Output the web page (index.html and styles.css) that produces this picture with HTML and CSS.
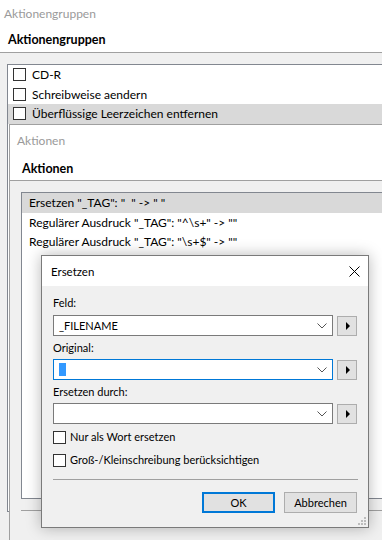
FILE: index.html
```html
<!DOCTYPE html>
<html lang="de">
<head>
    <meta charset="UTF-8">
    <title>Ersetzen</title>
    <link rel="stylesheet" href="styles.css">
</head>
<body>
    <div class="desk">
        <!-- Fenster 1: Aktionengruppen -->
        <div class="win win-groups">
            <div class="win-head">
                <div class="win-title">Aktionengruppen</div>
                <div class="win-caption">Aktionengruppen</div>
            </div>
            <div class="win-body">
                <div class="listbox list-groups">
                    <div class="row"><span class="chk"></span>CD-R</div>
                    <div class="row"><span class="chk"></span>Schreibweise aendern</div>
                    <div class="row sel"><span class="chk"></span>Überflüssige Leerzeichen entfernen</div>
                </div>
            </div>
        </div>

        <!-- Fenster 2: Aktionen -->
        <div class="win win-actions">
            <div class="win-head">
                <div class="win-title">Aktionen</div>
                <div class="win-caption">Aktionen</div>
            </div>
            <div class="win-body">
                <div class="listbox list-actions">
                    <div class="row sel">Ersetzen "_TAG": "&nbsp; " -&gt; " "</div>
                    <div class="row">Regulärer Ausdruck "_TAG": "^\s+" -&gt; ""</div>
                    <div class="row">Regulärer Ausdruck "_TAG": "\s+$" -&gt; ""</div>
                </div>
                <div class="win-foot"></div>
            </div>
        </div>

        <!-- Dialog: Ersetzen -->
        <div class="dialog">
            <div class="dlg-titlebar">
                <span class="dlg-title">Ersetzen</span>
                <span class="dlg-close">
                    <svg width="11" height="11" viewBox="0 0 11 11"><path d="M0.5 0.5 L10.5 10.5 M10.5 0.5 L0.5 10.5" stroke="#000" stroke-width="1" fill="none"/></svg>
                </span>
            </div>
            <div class="dlg-body">
                <div class="lbl lbl-first">Feld:</div>
                <div class="field">
                    <div class="combo"><span class="combo-text">_FILENAME</span><span class="chev"><svg width="10" height="6" viewBox="0 0 10 6"><polyline points="0.5,0.5 5,5 9.5,0.5" fill="none" stroke="#555" stroke-width="1"/></svg></span></div>
                    <div class="arrow-btn"><span class="tri"></span></div>
                </div>
                <div class="lbl">Original:</div>
                <div class="field">
                    <div class="combo focus"><span class="caret"></span><span class="chev"><svg width="10" height="6" viewBox="0 0 10 6"><polyline points="0.5,0.5 5,5 9.5,0.5" fill="none" stroke="#555" stroke-width="1"/></svg></span></div>
                    <div class="arrow-btn"><span class="tri"></span></div>
                </div>
                <div class="lbl">Ersetzen durch:</div>
                <div class="field">
                    <div class="combo"><span class="combo-text"></span><span class="chev"><svg width="10" height="6" viewBox="0 0 10 6"><polyline points="0.5,0.5 5,5 9.5,0.5" fill="none" stroke="#555" stroke-width="1"/></svg></span></div>
                    <div class="arrow-btn"><span class="tri"></span></div>
                </div>
                <label class="check check-first"><span class="chk"></span>Nur als Wort ersetzen</label>
                <label class="check"><span class="chk"></span>Groß-/Kleinschreibung berücksichtigen</label>
                <div class="sep"></div>
                <div class="buttons">
                    <button class="btn default">OK</button>
                    <button class="btn">Abbrechen</button>
                </div>
            </div>
            <svg class="grip" width="8" height="8" viewBox="0 0 8 8">
                <rect x="6" y="0" width="2" height="2" fill="#bcbcbc"/>
                <rect x="3" y="3" width="2" height="2" fill="#bcbcbc"/>
                <rect x="6" y="3" width="2" height="2" fill="#bcbcbc"/>
                <rect x="0" y="6" width="2" height="2" fill="#bcbcbc"/>
                <rect x="3" y="6" width="2" height="2" fill="#bcbcbc"/>
                <rect x="6" y="6" width="2" height="2" fill="#bcbcbc"/>
            </svg>
        </div>
    </div>
</body>
</html>
```

FILE: styles.css
```css
* { box-sizing: border-box; }
body { margin: 0; font-family: Lato, "Noto Sans", sans-serif; font-size: 12px; color: #000; background-color: #f0f0f0; }
.desk { position: relative; width: 382px; height: 540px; overflow: hidden; background-color: #f0f0f0; }

/* Fenster */
.win { background-color: #f0f0f0; }
.win-head { background-color: #fff; border-bottom: 1px solid #a0a0a0; }
.win-title { color: #9a9a9a; }
.win-caption { font-weight: bold; font-size: 12.5px; }

.win-groups { height: 540px; }
.win-groups .win-title { height: 27px; line-height: 27px; padding-left: 4px; }
.win-groups .win-caption { height: 25px; line-height: 25px; padding-left: 8px; }
.win-groups .win-body { padding: 11px 0 0 7px; }

.win-actions { position: absolute; left: 9px; top: 124px; width: 400px; height: 420px; border-top: 1px solid #a0a0a0; border-left: 1px solid #a0a0a0; }
.win-actions .win-title { height: 32px; line-height: 32px; padding-left: 7px; }
.win-actions .win-caption { height: 23px; line-height: 23px; padding-left: 12px; }
.win-actions .win-body { padding: 11px 0 0 11px; }
.win-foot { margin-top: 11px; height: 20px; border-top: 1px solid #a0a0a0; }

/* Listen */
.listbox { background-color: #fff; border: 1px solid #828790; border-right: none; }
.listbox .row { height: 19.5px; line-height: 19.5px; white-space: nowrap; display: flex; align-items: center; }
.listbox .row.sel { background-color: #d9d9d9; }
.list-groups { height: 448px; }
.list-groups .row { padding-left: 5px; }
.list-groups .chk { margin-right: 6px; }
.list-actions { height: 307px; }
.list-actions .row { padding-left: 7px; }

.chk { display: inline-block; width: 13px; height: 13px; border: 1px solid #333; background-color: #fff; flex: none; }

/* Dialog */
.dialog { position: absolute; left: 41px; top: 255px; width: 328px; height: 273px; border: 1px solid #7a7a7a; background-color: #f0f0f0; box-shadow: 0 0 14px rgba(0, 0, 0, 0.28); font-size: 11px; }
.dlg-titlebar { height: 30px; background-color: #fff; display: flex; align-items: center; justify-content: space-between; font-size: 11.5px; }
.dlg-title { padding-left: 9px; }
.dlg-close { width: 28px; height: 30px; display: flex; align-items: center; justify-content: center; }
.dlg-body { padding: 9px 11px 0 11px; }

.lbl { height: 16px; line-height: 16px; margin-top: 4px; margin-bottom: 3px; }
.lbl-first { margin-top: 0; margin-bottom: 4px; }
.field { display: flex; gap: 4px; align-items: center; }
.combo { flex: 1; height: 21px; background-color: #fff; border: 1px solid #7a7a7a; display: flex; align-items: center; padding-left: 5px; }
.combo.focus { border-color: #0078d7; }
.combo-text { flex: 1; }
.caret { width: 7px; height: 13px; background-color: #3399ff; }
.chev { margin-left: auto; width: 20px; display: flex; justify-content: center; padding-top: 1px; }
.arrow-btn { width: 20px; height: 20px; background-color: #e1e1e1; border: 1px solid #adadad; display: flex; align-items: center; justify-content: center; }
.tri { width: 0; height: 0; border-top: 4px solid transparent; border-bottom: 4px solid transparent; border-left: 4px solid #000; margin-left: 1px; }

.check { display: flex; align-items: center; gap: 4px; height: 16px; line-height: 16px; margin-top: 7px; }
.check-first { margin-top: 5px; }
.sep { margin-top: 11px; height: 1px; background-color: #a0a0a0; margin-right: -1px; }
.buttons { display: flex; justify-content: flex-end; gap: 9px; margin-top: 12px; }
.btn { font: inherit; color: #000; width: 73px; height: 21px; padding: 0; background-color: #e1e1e1; border: 1px solid #adadad; }
.btn.default { border: 2px solid #0078d7; }
.grip { position: absolute; right: 2px; bottom: 2px; }
```
